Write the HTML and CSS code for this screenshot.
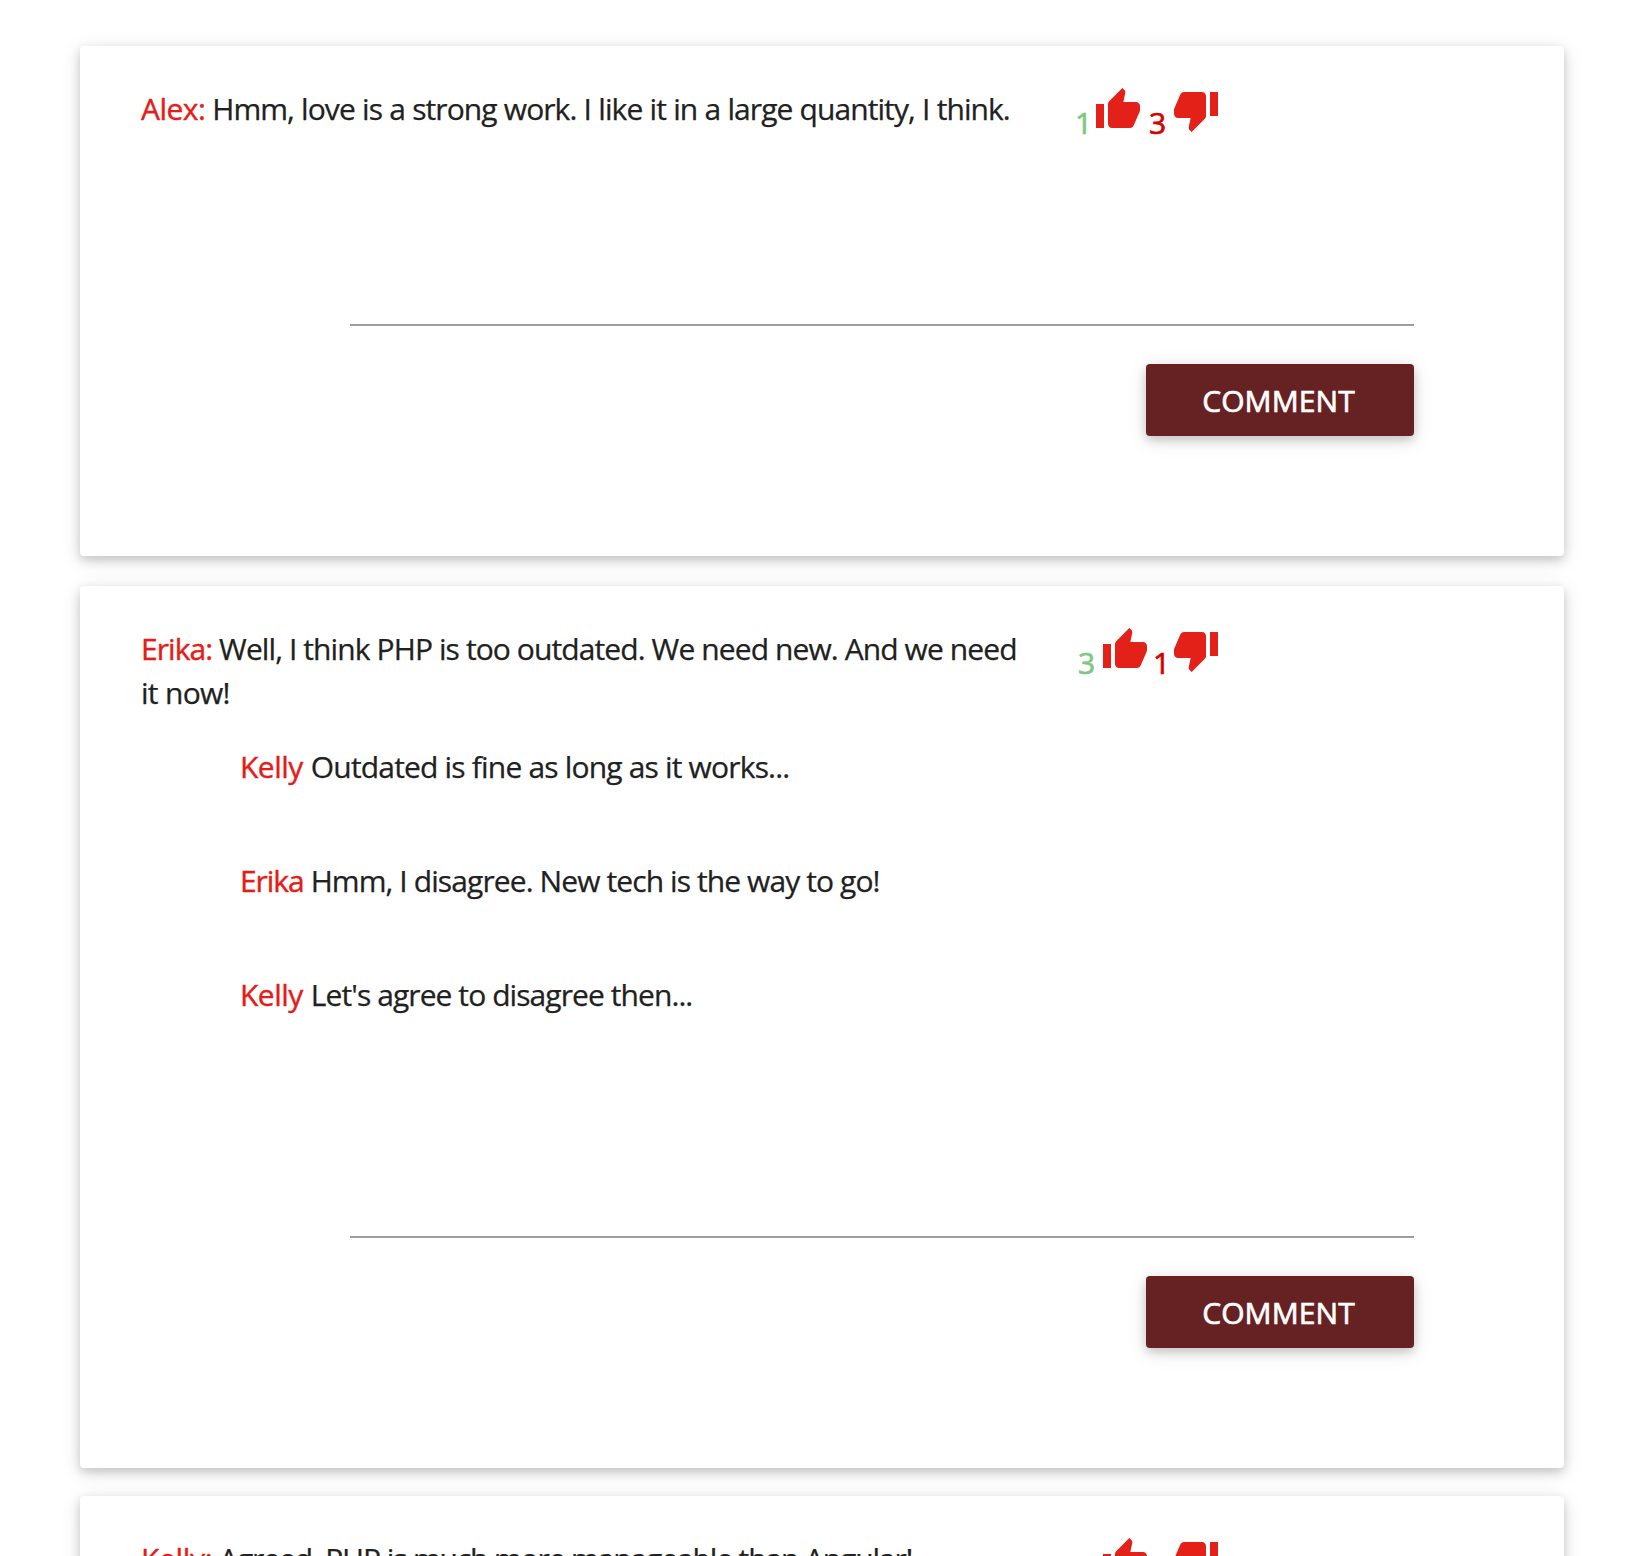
FILE: index.html
```
<!DOCTYPE html>
<html lang="en">
<head>
<meta charset="utf-8">
<title>Comments</title>
<link rel="stylesheet" href="styles.css">
</head>
<body>
<svg class="sprite" aria-hidden="true">
  <symbol id="thumb-up" viewBox="0 0 24 24"><path d="M1 21h4V9H1v12zm22-11c0-1.1-.9-2-2-2h-6.31l.95-4.57.03-.32c0-.41-.17-.79-.44-1.06L14.17 1 7.59 7.59C7.22 7.95 7 8.45 7 9v10c0 1.1.9 2 2 2h9c.83 0 1.54-.5 1.84-1.22l3.02-7.05c.09-.23.14-.47.14-.73v-2z"/></symbol>
  <symbol id="thumb-down" viewBox="0 0 24 24"><path d="M15 3H6c-.83 0-1.54.5-1.84 1.22l-3.02 7.05c-.09.23-.14.47-.14.73v2c0 1.1.9 2 2 2h6.31l-.95 4.57-.03.32c0 .41.17.79.44 1.06L9.83 23l6.59-6.59c.36-.36.58-.86.58-1.41V5c0-1.1-.9-2-2-2zm4 0v12h4V3h-4z"/></symbol>
</svg>
<main class="thread">
  <article class="card">
    <header class="post">
      <p class="post-text"><span class="author author-alex">Alex:</span> <span class="msg-love">Hmm, love is a strong work. I like it in a large quantity, I think.</span></p>
      <div class="votes">
        <span class="count up one">1</span><svg class="icon"><use href="#thumb-up"/></svg>
        <span class="count down three">3</span><svg class="icon"><use href="#thumb-down"/></svg>
      </div>
    </header>
    <form class="comment-form">
      <input class="field" type="text" aria-label="Comment">
      <button class="btn" type="button">COMMENT</button>
    </form>
  </article>

  <article class="card card-replies">
    <header class="post">
      <p class="post-text"><span class="author author-erika">Erika:</span> <span class="msg-php">Well, I think PHP is too outdated. We need new. And we need</span> <span class="msg-now">it now!</span></p>
      <div class="votes">
        <span class="count up three">3</span><svg class="icon"><use href="#thumb-up"/></svg>
        <span class="count down one">1</span><svg class="icon"><use href="#thumb-down"/></svg>
      </div>
    </header>
    <ul class="replies">
      <li><span class="author reply-kelly">Kelly</span> <span class="msg-works">Outdated is fine as long as it works...</span></li>
      <li><span class="author reply-erika">Erika</span> <span class="msg-tech">Hmm, I disagree. New tech is the way to go!</span></li>
      <li><span class="author reply-kelly">Kelly</span> <span class="msg-agree">Let's agree to disagree then...</span></li>
    </ul>
    <form class="comment-form">
      <input class="field" type="text" aria-label="Comment">
      <button class="btn" type="button">COMMENT</button>
    </form>
  </article>

  <article class="card">
    <header class="post">
      <p class="post-text"><span class="author author-kelly">Kelly:</span> <span class="msg-angular">Agreed, PHP is much more manageable than Angular!</span></p>
      <div class="votes">
        <span class="count up three">3</span><svg class="icon"><use href="#thumb-up"/></svg>
        <span class="count down one">1</span><svg class="icon"><use href="#thumb-down"/></svg>
      </div>
    </header>
  </article>
</main>
</body>
</html>
```

FILE: styles.css
```
* { box-sizing: border-box; }

body {
  margin: 0;
  height: 1556px;
  overflow: hidden;
  background: #fff;
  color: #212121;
  font: 30px/44px "Open Sans", sans-serif;
  letter-spacing: -0.85px;
  -webkit-text-stroke: 0.25px currentColor;
}

p, ul { margin: 0; padding: 0; }

.sprite { display: none; }

.thread {
  display: flex;
  flex-direction: column;
  padding: 46px 81px 0 80px;
}

.card {
  flex: none;
  display: flex;
  flex-direction: column;
  height: 510px;
  margin-bottom: 30px;
  padding: 41px 150px 120px 61px;
  border-radius: 4px;
  background: #fff;
  box-shadow: 0 4px 10px rgba(0, 0, 0, 0.16), 0 4px 20px rgba(0, 0, 0, 0.12);
}

.card-replies { height: 882px; margin-bottom: 28px; }

.post {
  display: grid;
  grid-template-columns: 895px 144px;
  column-gap: 40px;
}

.author { color: #e51c17; -webkit-text-stroke-width: 0.4px; }

/* Tracking per author and message */
.author-alex { letter-spacing: -0.55px; }
.author-erika { letter-spacing: -0.95px; }
.author-kelly { letter-spacing: -0.35px; }
.reply-kelly { letter-spacing: -0.5px; margin-right: 1px; }
.reply-erika { letter-spacing: -1.05px; }
.msg-love { letter-spacing: -0.93px; word-spacing: 0.35px; }
.msg-php { letter-spacing: -0.9px; }
.msg-now { letter-spacing: -0.7px; }
.msg-works { letter-spacing: -0.82px; }
.msg-tech { letter-spacing: -0.9px; }
.msg-agree { letter-spacing: -0.92px; }
.msg-angular { letter-spacing: -1.13px; }

.votes {
  display: flex;
  align-items: flex-start;
  height: 44px;
}

.count {
  padding-top: 14px;
  letter-spacing: 0;
}

.one { width: 18px; text-indent: -1px; }
.three { width: 25px; padding-left: 2px; }
.up { color: #81c784; -webkit-text-stroke-width: 0.7px; }
.down { color: #d50000; -webkit-text-stroke-width: 0.7px; margin-left: 5px; }

.icon { flex: none; width: 48px; height: 48px; margin-top: -1px; fill: #e32118; stroke: none; }

.replies {
  list-style: none;
  display: flex;
  flex-direction: column;
  gap: 70px;
  margin-top: 30px;
  padding-left: 99px;
}

.comment-form {
  display: flex;
  flex-direction: column;
  align-items: flex-end;
  gap: 38px;
  margin-top: auto;
}

.field {
  width: 1064px;
  height: 90px;
  border: 0;
  border-bottom: 2px solid #9e9e9e;
  background: none;
  outline: none;
}

.btn {
  width: 268px;
  height: 72px;
  padding: 2px 3px 0 0;
  border: 0;
  border-radius: 4px;
  background: #662222;
  color: #fff;
  font: 30px/70px "Open Sans", sans-serif;
  letter-spacing: 0.1px;
  -webkit-text-stroke: 0.7px #fff;
  box-shadow: 0 4px 10px rgba(0, 0, 0, 0.16), 0 4px 20px rgba(0, 0, 0, 0.12);
}
```
